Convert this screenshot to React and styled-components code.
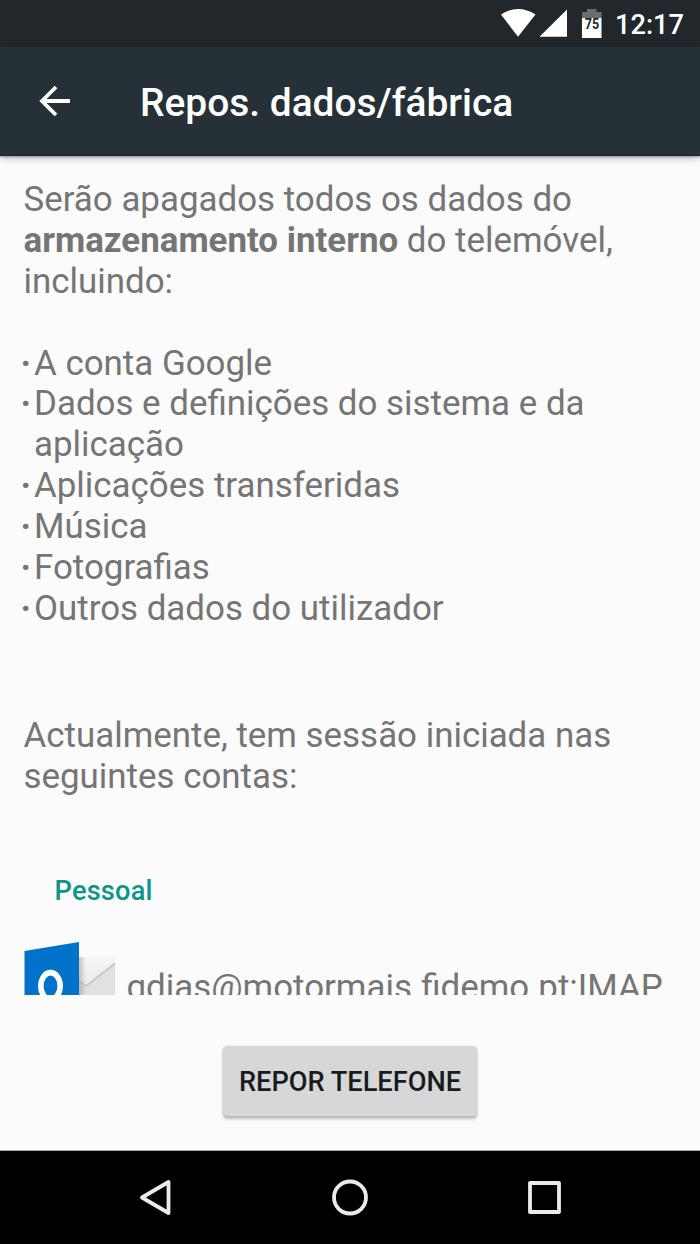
import React from 'react';
import styled, { createGlobalStyle } from 'styled-components';

const GlobalStyle = createGlobalStyle`
  * {
    box-sizing: border-box;
  }

  body {
    margin: 0;
    background: #fbfbfb;
    font-family: Roboto, sans-serif;
  }
`;

const Screen = styled.div`
  display: flex;
  flex-direction: column;
  width: 700px;
  height: 1244px;
  overflow: hidden;
  background: #fbfbfb;
`;

const StatusBar = styled.div`
  display: flex;
  align-items: center;
  justify-content: flex-end;
  flex: none;
  height: 47px;
  padding-right: 16px;
  background: #21272b;
`;

const StatusIcons = styled.svg`
  display: block;
  width: 115px;
  height: 47px;
`;

const Clock = styled.span`
  padding-top: 3px;
  color: #fff;
  font-size: 27.2px;
  font-weight: 500;
  line-height: 44px;
`;

const Toolbar = styled.header`
  display: flex;
  align-items: center;
  flex: none;
  height: 109px;
  padding-left: 39px;
  background: #263137;
  border-bottom: 1px solid #1b262c;
  box-shadow: 0 1px 2px rgba(0, 0, 0, 0.3), 0 2px 8px rgba(0, 0, 0, 0.25);
`;

const BackButton = styled.button`
  display: block;
  width: 32px;
  height: 32px;
  margin-right: 69px;
  padding: 0;
  border: none;
  background: none;
`;

const Title = styled.h1`
  margin: 0;
  padding-top: 3px;
  color: #fff;
  font-size: 38.9px;
  font-weight: 500;
  line-height: 46px;
  white-space: nowrap;
`;

const Content = styled.main`
  flex: none;
  height: 839px;
  padding: 24px 23px 0 23.5px;
  overflow: hidden;
  color: #757575;
  font-size: 34.9px;
  line-height: 40.85px;
`;

const Paragraph = styled.p`
  margin: 0;
`;

const DataList = styled.ul`
  margin: 41px 0 86.5px;
  padding: 0;
  list-style: none;
`;

const DataItem = styled.li`
  display: flex;
  width: 600px;

  &::before {
    content: '·';
    flex: none;
    width: 10.5px;
    font-weight: 700;
    text-indent: -3px;
  }
`;

const GroupTitle = styled.h2`
  margin: 77px 0 0 31px;
  color: #0a9688;
  font-size: 27.2px;
  font-weight: 500;
  letter-spacing: 0.2px;
  line-height: 32px;
`;

const Account = styled.div`
  display: flex;
  align-items: flex-start;
  margin-top: 34px;
`;

const OutlookIcon = styled.svg`
  flex: none;
  width: 93px;
  height: 93px;
  margin-left: -0.5px;
`;

const AccountName = styled.span`
  margin: 27px 0 0 10.5px;
  white-space: nowrap;
`;

const Footer = styled.footer`
  display: flex;
  align-items: flex-start;
  justify-content: center;
  flex: none;
  height: 156px;
  padding-top: 51px;
  border-bottom: 1px solid #a9acac;
`;

const ResetButton = styled.button`
  width: 254px;
  height: 70px;
  padding: 2px 0 0;
  border: none;
  border-radius: 4px;
  background: #d7d7d7;
  box-shadow: 0 3px 3px rgba(0, 0, 0, 0.25), 0 0 2px rgba(0, 0, 0, 0.12);
  color: #181c1e;
  font-family: inherit;
  font-size: 27.2px;
  font-weight: 500;
  white-space: nowrap;
`;

const NavBar = styled.nav`
  display: flex;
  flex: 1;
  align-items: center;
  justify-content: center;
  gap: 157px;
  background: #000;
`;

const NavIcon = styled.svg`
  display: block;
  width: 38px;
  height: 38px;
  fill: none;
  stroke: #ebebeb;
  stroke-width: 3.8;
  stroke-linejoin: round;
`;

const erasedData = [
  'A conta Google',
  'Dados e definições do sistema e da aplicação',
  'Aplicações transferidas',
  'Música',
  'Fotografias',
  'Outros dados do utilizador',
];

const App = () => {
  return (
    <>
      <GlobalStyle />
      <Screen>
        <StatusBar>
          <StatusIcons viewBox="0 0 115 47">
            {/* Wi-Fi */}
            <path d="M1 14.5Q9 9 18 9T35.5 14.5L18 36.8Z" fill="#fff" />
            {/* Mobile signal */}
            <path d="M67 9.5V36.8H39.5Z" fill="#fff" />
            {/* Battery */}
            <path d="M82 12h5V9h9.5v3h5v6H82Z" fill="#6b6e70" />
            <path d="M82 18h19.5v20H82Z" fill="#fff" />
            <text
              transform="translate(92 29.2) scale(0.88 1)"
              textAnchor="middle"
              fontFamily="Roboto"
              fontSize="14.3"
              fontWeight="700"
              fill="#21272b"
            >
              75
            </text>
          </StatusIcons>
          <Clock>12:17</Clock>
        </StatusBar>

        <Toolbar>
          <BackButton aria-label="Voltar">
            <svg width="32" height="32" viewBox="0 0 32 32" fill="none" stroke="#fff" strokeWidth="3.8">
              <path d="M31 16H3M17 2L3 16L17 30" />
            </svg>
          </BackButton>
          <Title>Repos. dados/fábrica</Title>
        </Toolbar>

        <Content>
          <Paragraph>
            Serão apagados todos os dados do <b>armazenamento interno</b> do telemóvel, incluindo:
          </Paragraph>
          <DataList>
            {erasedData.map((item) => (
              <DataItem key={item}>{item}</DataItem>
            ))}
          </DataList>
          <Paragraph>Actualmente, tem sessão iniciada nas seguintes contas:</Paragraph>

          <GroupTitle>Pessoal</GroupTitle>
          <Account>
            <OutlookIcon viewBox="0 0 93 93">
              <defs>
                <linearGradient id="shade" x1="0" x2="1">
                  <stop offset="0" stopColor="#000" stopOpacity="0.2" />
                  <stop offset="1" stopColor="#000" stopOpacity="0" />
                </linearGradient>
                <linearGradient id="flapShade" x1="0" y1="0" x2="0" y2="1">
                  <stop offset="0" stopColor="#f5f5f5" />
                  <stop offset="1" stopColor="#ebebeb" />
                </linearGradient>
              </defs>
              <path d="M50 16H90Q92 16 92 18V77H50Z" fill="#e1e1e1" />
              <path d="M56 38L63 45L92 22.5" fill="none" stroke="#c6c6c6" strokeWidth="2" />
              <path d="M50 16H90Q92 16 92 18V21L63 44L50 35Z" fill="url(#flapShade)" />
              <path d="M56 16H63V77H56Z" fill="url(#shade)" />
              <path d="M1.5 10L56 1V93L1.5 83Z" fill="#0072c9" />
              <ellipse cx="27.5" cy="45" rx="9.7" ry="13.4" fill="none" stroke="#fff" strokeWidth="5.6" />
            </OutlookIcon>
            <AccountName>gdias@motormais.fidemo.pt:IMAP</AccountName>
          </Account>
        </Content>

        <Footer>
          <ResetButton>REPOR TELEFONE</ResetButton>
        </Footer>

        <NavBar>
          <NavIcon viewBox="0 0 38 38">
            <path d="M6 18.5L32.5 3V34Z" />
          </NavIcon>
          <NavIcon viewBox="0 0 38 38">
            <circle cx="19" cy="18.5" r="16" />
          </NavIcon>
          <NavIcon viewBox="0 0 38 38">
            <rect x="4" y="4" width="29" height="29" />
          </NavIcon>
        </NavBar>
      </Screen>
    </>
  );
};

export default App;
